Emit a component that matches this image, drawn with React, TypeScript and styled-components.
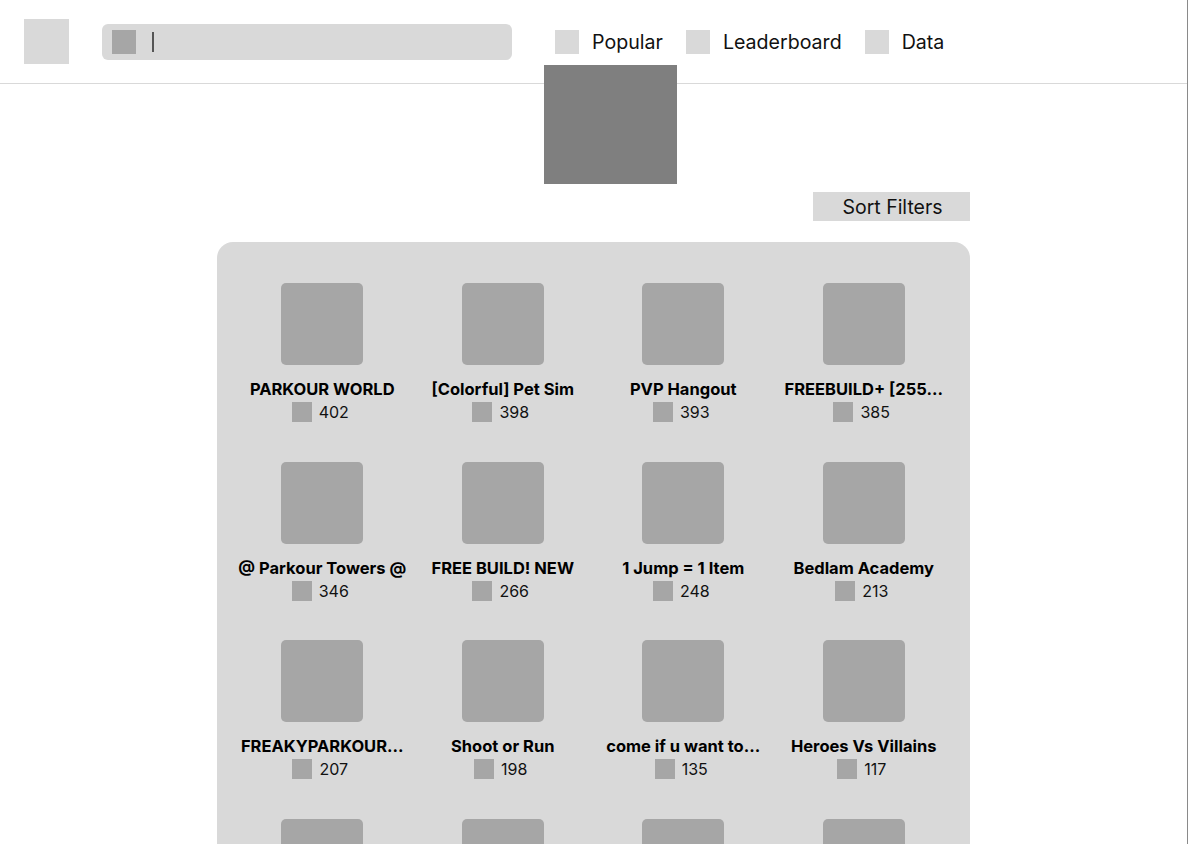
import React from "react";
import styled, { createGlobalStyle } from "styled-components";

const GlobalStyle = createGlobalStyle`
  html, body { margin: 0; padding: 0; background: #ffffff; }
  body { font-family: Inter, "Noto Sans", Roboto, sans-serif; color: #000; }
  * { box-sizing: border-box; }
`;

const Page = styled.div`
  position: relative;
  width: 1188px;
  min-height: 100vh;
  border-right: 1px solid #8a8a8a;
`;

const Header = styled.header`
  display: flex;
  align-items: center;
  height: 84px;
  padding-left: 24px;
  border-bottom: 1px solid #d9d9d9;
`;

const Logo = styled.div`
  width: 45px;
  height: 45px;
  background: #d9d9d9;
`;

const Search = styled.div`
  display: flex;
  align-items: center;
  margin-left: 33px;
  width: 410px;
  height: 36px;
  border-radius: 6px;
  background: #d9d9d9;
  padding-left: 10px;
`;

const SearchIcon = styled.div`
  width: 24px;
  height: 24px;
  background: #a6a6a6;
`;

const Caret = styled.div`
  width: 2px;
  height: 20px;
  margin-left: 16px;
  background: #555;
`;

const Nav = styled.nav`
  display: flex;
  align-items: center;
  gap: 23px;
  margin-left: 43px;
`;

const NavItem = styled.div`
  display: flex;
  align-items: center;
  gap: 13px;
  font-size: 19.6px;
  line-height: 24px;
  color: #111;
`;

const NavIcon = styled.div`
  width: 24px;
  height: 24px;
  background: #d9d9d9;
`;

const Dropdown = styled.div`
  position: absolute;
  left: 544px;
  top: 65px;
  width: 133px;
  height: 119px;
  background: #7f7f7f;
`;

const Main = styled.main`
  width: 753px;
  margin: 0 auto;
  display: flex;
  flex-direction: column;
  align-items: flex-end;
  padding-top: 108px;
`;

const SortButton = styled.button`
  width: 157px;
  height: 29px;
  border: none;
  background: #d9d9d9;
  font-family: Inter, "Noto Sans", sans-serif;
  font-size: 19.5px;
  color: #111;
  padding: 2px 0 0 2px;
  line-height: 27px;
`;

const Panel = styled.section`
  margin-top: 21px;
  width: 753px;
  background: #d9d9d9;
  border-radius: 16px;
  padding: 41px 16px 40px 15px;
  display: grid;
  grid-template-columns: repeat(4, 1fr);
  row-gap: 39.5px;
`;

const Card = styled.div`
  display: flex;
  flex-direction: column;
  align-items: center;
`;

const Thumb = styled.div`
  width: 82px;
  height: 82px;
  border-radius: 5px;
  background: #a6a6a6;
`;

const Title = styled.div`
  margin-top: 15px;
  font-size: 16.5px;
  line-height: 19px;
  font-weight: 700;
  white-space: nowrap;
  color: #000;
`;

const CountRow = styled.div`
  display: flex;
  align-items: center;
  gap: 7px;
  margin-top: 3px;
  padding-right: 4px;
  height: 20px;
  font-size: 16px;
  color: #111;
`;

const CountIcon = styled.div`
  width: 20px;
  height: 20px;
  background: #a6a6a6;
`;

const games = [
  { name: "PARKOUR WORLD", count: 402 },
  { name: "[Colorful] Pet Sim", count: 398 },
  { name: "PVP Hangout", count: 393 },
  { name: "FREEBUILD+ [255...", count: 385 },
  { name: "@ Parkour Towers @", count: 346 },
  { name: "FREE BUILD! NEW", count: 266 },
  { name: "1 Jump = 1 Item", count: 248 },
  { name: "Bedlam Academy", count: 213 },
  { name: "FREAKYPARKOUR...", count: 207 },
  { name: "Shoot or Run", count: 198 },
  { name: "come if u want to...", count: 135 },
  { name: "Heroes Vs Villains", count: 117 },
  { name: "Obby Rush", count: 104 },
  { name: "Survival Island", count: 98 },
  { name: "Tower Defense", count: 87 },
  { name: "Hide and Seek", count: 76 },
];

export default function App() {
  return (
    <Page>
      <GlobalStyle />
      <Header>
        <Logo />
        <Search>
          <SearchIcon />
          <Caret />
        </Search>
        <Nav>
          <NavItem>
            <NavIcon />
            Popular
          </NavItem>
          <NavItem>
            <NavIcon />
            Leaderboard
          </NavItem>
          <NavItem>
            <NavIcon />
            Data
          </NavItem>
        </Nav>
      </Header>
      <Dropdown />
      <Main>
        <SortButton>Sort Filters</SortButton>
        <Panel>
          {games.map((g) => (
            <Card key={g.name}>
              <Thumb />
              <Title>{g.name}</Title>
              <CountRow>
                <CountIcon />
                {g.count}
              </CountRow>
            </Card>
          ))}
        </Panel>
      </Main>
    </Page>
  );
}
